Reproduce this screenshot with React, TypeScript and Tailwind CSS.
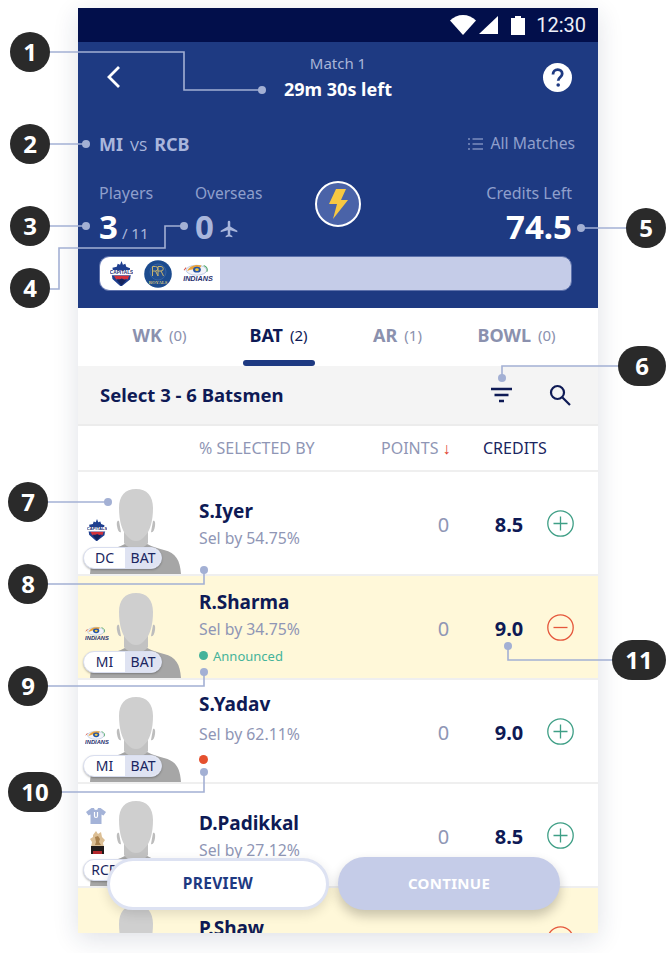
import React from "react";

const DC = ({ s = 24 }: { s?: number }) => (
  <svg width={s} height={s * 1.12} viewBox="0 0 24 27">
    <path d="M12 0l1.500 4 2.500-1 1 3 4 1.500-.5 3 2.500 1.500-1.500 4-.5 3.500-9.500 7.500L2.500 19l-.5-3.500L.5 11.500 3 10l-.5-3L7 6l1-3 2.500 1z" fill="#1f3f8f" />
    <path d="M4 15.500h16l-1.500 4-2-1-1.500 2-2.500-2.500-2.500 2.500-1.500-2-2 1z" fill="#d4323a" />
    <path d="M7 20l5-1.500 5 1.500-5 6z" fill="#14245e" />
    <rect x="0.500" y="9.500" width="23" height="5.500" rx="0.800" fill="#fff" />
    <text x="12" y="13.800" textAnchor="middle" fontSize="5" fontWeight="800" fill="#1b2f73" fontFamily="Liberation Sans, sans-serif">CAPITALS</text>
  </svg>
);
const RR = ({ s = 28 }: { s?: number }) => (
  <svg width={s} height={s} viewBox="0 0 28 28">
    <circle cx="14" cy="14" r="13.800" fill="#1c4b8e" />
    <circle cx="14" cy="12" r="8" fill="#234f90" stroke="#3f6ca8" strokeWidth="0.700" />
    <path d="M8.500 16V6.500h3a2.200 2.200 0 010 4.500h-3M11.500 11l2.500 5M14 16V6.500h3a2.200 2.200 0 010 4.500h-3M17 11l2.500 5" fill="none" stroke="#c9b56e" strokeWidth="1" />
    <text x="14" y="24" textAnchor="middle" fontSize="4.600" fontWeight="700" fill="#d3c27e" fontFamily="Liberation Serif, serif">ROYALS</text>
  </svg>
);
const MI = ({ w = 28 }: { w?: number }) => (
  <svg width={w} height={w * 0.62} viewBox="0 0 29 18">
    <ellipse cx="13" cy="6" rx="10" ry="4.800" fill="#f3f4f8" stroke="#9cb0d6" strokeWidth="0.600" />
    <path d="M4 7c2-5 8-7 14-5.500L15 6C11 4.500 8 5 4 7z" fill="#e9a23b" />
    <ellipse cx="13.500" cy="5.500" rx="3.800" ry="2.800" fill="#2555a6" />
    <ellipse cx="13.500" cy="5.500" rx="1.800" ry="1.300" fill="#f5c83c" />
    <path d="M20 1.500a8 5 0 013 6" stroke="#4ea868" strokeWidth="1" fill="none" />
    <path d="M3 3.500L1 6" stroke="#d9574a" strokeWidth="1" fill="none" />
    <text x="14.500" y="16.500" textAnchor="middle" fontSize="7" fontWeight="800" fontStyle="italic" fill="#27306e" fontFamily="Liberation Sans, sans-serif">INDIANS</text>
  </svg>
);
const RCB = () => (
  <svg width="15" height="23" viewBox="0 0 15 23">
    <path d="M3 4l3-4 2 3 3-2 1 5 3 3-2 3 1 4H1l1-5-2-3 3-2z" fill="#dcbf95" />
    <path d="M5 6l3-1 2 3-1 3 2 3H5l1-3z" fill="#a9824f" />
    <rect x="1" y="15" width="13" height="8" fill="#1f1a1a" />
    <rect x="3" y="20" width="9" height="3" fill="#b3282d" />
  </svg>
);
const Shirt = () => (
  <svg width="20" height="16" viewBox="0 0 20 16">
    <path d="M5.500 0h2.500a2 2 0 004 0h2.500L20 4l-2.500 3.500-2-1V16h-11V6.500l-2 1L0 4z" fill="#a4b3d8" />
    <path d="M8.500 4v4a1.500 1.500 0 003 0V4" stroke="#fff" strokeWidth="1.200" fill="none" />
  </svg>
);

const Avatar = () => (
  <svg className="absolute left-[12px] bottom-0" width="91" height="85" viewBox="0 0 91 85">
    <path d="M0 85c1-14 6-21 18-24 10-3 17-5 21-9h14c4 4 11 6 21 9 12 3 16 10 17 24z" fill="#a6a6a6" />
    <path d="M34 30h24v24c-3 4-8 6-12 6s-9-2-12-6z" fill="#c2c2c2" />
    <path d="M29 32c-2-1-2.500 2-2 5 .6 4 2 7 4 6zM63 32c2-1 2.500 2 2 5-.6 4-2 7-4 6z" fill="#bdbdbd" />
    <path d="M46 0c-11 0-17 7-17 19 0 13 3 24 9 29 3 3 5 4 8 4s5-1 8-4c6-5 9-16 9-29C63 7 57 0 46 0z" fill="#cfcfcf" />
  </svg>
);

type P = {
  name: string; sel?: string; credits?: string; team?: string; logo?: React.ReactNode;
  picked?: boolean; status?: "ann" | "un"; shirt?: boolean;
};

const Row = ({ name, sel, credits, team, logo, picked, status, shirt }: P) => (
  <div className={`flex h-[104px] shrink-0 border-b-2 border-[#efefef] ${picked ? "bg-[#fff8d9]" : "bg-white"}`}>
    <div className="relative h-full w-[121px] shrink-0">
      <Avatar />
      {shirt && <div className="absolute left-[8px] top-[24px]"><Shirt /></div>}
      {logo && <div className="absolute left-[7px] top-[47px] flex h-[22px] w-[24px] items-center justify-center">{logo}</div>}
      {team && (
        <div className="absolute left-[5px] bottom-[5px] flex h-[22px] w-[79px] overflow-hidden rounded-full border border-[#d9deef] bg-white text-[14px] leading-[20px] text-[#1a2560] shadow-[0_1px_2px_rgba(0,0,0,0.25)]">
          <span className="w-[41px] text-center">{team}</span>
          <span className="flex-1 bg-[#dfe3f2] text-center">BAT</span>
        </div>
      )}
    </div>
    <div className={`flex min-w-0 flex-1 flex-col ${sel ? "justify-center" : "pt-[28px]"} ${status ? "" : "pt-[2px]"}`}>
      <div className="whitespace-nowrap text-[19px] font-bold leading-[24px] text-[#0e1a55]">{name}</div>
      {sel && <div className={`text-[15.8px] leading-[22px] text-[#8f96b5] ${status === "un" ? "mt-[7px]" : "mt-[4px]"}`}>{sel}</div>}
      {status === "ann" && (
        <div className="mt-[7px] flex items-center gap-[5px] text-[13px] leading-[18px] text-[#45b39a]">
          <span className="h-[9px] w-[9px] rounded-full bg-[#45b39a]" />Announced
        </div>
      )}
      {status === "un" && (
        <div className="mb-[2px] mt-[5px] flex h-[18px] items-center"><span className="h-[9px] w-[9px] rounded-full bg-[#e5502e]" /></div>
      )}
    </div>
    <div className="flex w-[87px] items-center justify-center pt-[3px] text-[20px] text-[#8f96b5]">{sel ? "0" : ""}</div>
    <div className="flex w-[44px] items-center justify-center pt-[3px] text-[20px] font-bold text-[#0e1a55]">{credits}</div>
    <div className="flex w-[67px] items-center pl-[16px] pt-[1px]">
      <svg width="27" height="27" viewBox="0 0 27 27" className="shrink-0" fill="none" stroke={picked ? "#e5573c" : "#3f9f86"} strokeWidth="1.300">
        <circle cx="13.500" cy="13.500" r="12.700" />
        <path d={picked ? "M6.500 13.500h14" : "M6.500 13.500h14M13.500 6.500v14"} />
      </svg>
    </div>
  </div>
);

const Badge = ({ n, cls }: { n: string; cls: string }) => (
  <div className={`absolute flex h-[40px] items-center justify-center rounded-full bg-[#2a2a2a] text-[24px] font-bold text-white ${cls}`}>{n}</div>
);

const Dot = ({ x, y }: { x: number; y: number }) => <circle cx={x} cy={y} r="4" fill="#a3b0d4" />;

const Tab = ({ t, n, active }: { t: string; n: string; active?: boolean }) => (
  <div className="relative flex flex-1 items-center justify-center gap-[7px] pb-[4px]">
    <span className={`text-[18px] font-bold ${active ? "text-[#0e1a55]" : "text-[#8b91ae]"}`}>{t}</span>
    <span className={`text-[15px] ${active ? "text-[#0e1a55]" : "text-[#8b91ae]"}`}>{n}</span>
    {active && <span className="absolute bottom-0 left-[24px] h-[6px] w-[72px] rounded-full bg-[#1e3a82]" />}
  </div>
);

export default function App() {
  return (
    <div className="relative h-[953px] w-[666px] overflow-hidden bg-white pt-[8px] font-['Noto_Sans',sans-serif]">
      <div className="relative ml-[78px] flex h-[925px] w-[520px] flex-col overflow-hidden bg-white shadow-[0_6px_24px_rgba(30,40,80,0.14)]">
        {/* status bar */}
        <div className="flex h-[34px] shrink-0 items-center justify-end bg-[#020f4b] pr-[12px]">
          <svg width="26" height="20" viewBox="0 0 26 20" fill="#fff"><path d="M0 5.500C3.500 2 8 0 13 0s9.500 2 13 5.500L13 20z" /></svg>
          <svg width="19" height="18" viewBox="0 0 19 18" fill="#fff" className="ml-[3px]"><path d="M19 0v18H0z" /></svg>
          <svg width="14" height="19" viewBox="0 0 14 19" fill="#fff" className="ml-[13px]"><path d="M4 0h6v2h4v17H0V2h4z" /></svg>
          <span className="ml-[11px] font-['Roboto',sans-serif] text-[20px] leading-none text-[#eef0f8]">12:30</span>
        </div>
        {/* header */}
        <div className="flex h-[266px] shrink-0 flex-col bg-[#1e3a82] pl-[21px] pr-[26px]">
          <div className="relative flex h-[70px] flex-col items-center pl-[5px] pt-[10px]">
            <span className="text-[15px] leading-[22px] text-[#a9b5d8]">Match 1</span>
            <span className="mt-[3px] text-[18px] font-bold leading-[24px] text-white">29m 30s left</span>
            <svg className="absolute left-[6px] top-[22px]" width="16" height="26" viewBox="0 0 16 26" fill="none" stroke="#fff" strokeWidth="2.800"><path d="M14 3L4 13l10 10" /></svg>
            <svg className="absolute right-0 top-[21px]" width="29" height="29" viewBox="0 0 29 29">
              <circle cx="14.500" cy="14.500" r="14.500" fill="#fff" />
              <path d="M10 11.500c0-3 2-4.800 4.700-4.800s4.500 1.700 4.500 4c0 3.500-4 3.500-4 7" fill="none" stroke="#1e3a82" strokeWidth="2.800" />
              <circle cx="15.200" cy="22" r="1.800" fill="#1e3a82" />
            </svg>
          </div>
          <div className="-mr-[3px] mt-[20px] flex h-[24px] items-center justify-between text-[#a9b6dc]">
            <div className="flex items-baseline">
              <span className="text-[18px] font-bold">MI</span>
              <span className="ml-[7px] text-[15px]">VS</span>
              <span className="ml-[7px] text-[18px] font-bold">RCB</span>
            </div>
            <div className="flex items-center text-[15.700px] text-[#8f9fcc]">
              <svg width="15" height="12" viewBox="0 0 15 12" stroke="#a9b6dc" strokeWidth="1.200" fill="none" className="mr-[8px]">
                <path d="M0 1h2M4.500 1H15M0 6h2M4.500 6H15M0 11h2M4.500 11H15" />
              </svg>
              All Matches
            </div>
          </div>
          <div className="mt-[26px] flex h-[74px] items-start">
            <div className="flex w-[216px] shrink-0">
              <div className="w-[96px]">
                <div className="text-[16px] leading-[22px] text-[#8f9fcc]">Players</div>
                <div className="mt-[3px] flex items-baseline leading-[40px]">
                  <span className="text-[33px] font-bold text-white">3</span>
                  <span className="ml-[4px] text-[15px] text-[#a9b6dc]">/ 11</span>
                </div>
              </div>
              <div>
                <div className="text-[15.500px] leading-[22px] text-[#8f9fcc]">Overseas</div>
                <div className="mt-[3px] flex items-center leading-[40px]">
                  <span className="text-[33px] font-bold text-[#a9b6dc]">0</span>
                  <svg className="ml-[5px] mt-[3px]" width="20" height="20" viewBox="0 0 24 24" fill="#a9b6dc">
                    <path d="M22 16v-2l-8.500-5V3.500a1.500 1.500 0 00-3 0V9L2 14v2l8.500-2.500V19L8 20.500V22l4-1 4 1v-1.500L13.500 19v-5.500z" />
                  </svg>
                </div>
              </div>
            </div>
            <div className="-mt-[1px] flex h-[46px] w-[46px] shrink-0 items-center justify-center rounded-full border-[2.500px] border-white bg-[#4a63a8]">
              <svg width="20" height="30" viewBox="0 0 20 30" fill="#f7c842"><path d="M8 0h10l-5 11h7L5 30l4-15H1z" /></svg>
            </div>
            <div className="flex flex-1 flex-col items-end">
              <div className="text-[16px] leading-[22px] text-[#8f9fcc]">Credits Left</div>
              <div className="mt-[3px] text-[33px] font-bold leading-[40px] text-white">74.5</div>
            </div>
          </div>
          <div className="flex h-[35px] overflow-hidden rounded-[10px] border border-[#5d71ab] bg-[#c5cce8]">
            <div className="flex w-[120px] items-center gap-[11px] rounded-l-[10px] bg-white pl-[10px]">
              <DC s={23} />
              <RR s={28} />
              <MI w={30} />
            </div>
          </div>
        </div>
        {/* tabs */}
        <div className="flex h-[58px] shrink-0 bg-white px-[22px]">
          <Tab t="WK" n="(0)" />
          <Tab t="BAT" n="(2)" active />
          <Tab t="AR" n="(1)" />
          <Tab t="BOWL" n="(0)" />
        </div>
        {/* select bar */}
        <div className="flex h-[60px] shrink-0 items-center border-b-2 border-[#ececec] bg-[#f4f4f4] pl-[22px] pr-[27px]">
          <span className="flex-1 text-[18.500px] font-bold text-[#0e1a55]">Select 3 - 6 Batsmen</span>
          <svg width="21" height="16" viewBox="0 0 21 16" stroke="#0e1a55" strokeWidth="2.300" fill="none"><path d="M0 2h21M3.500 8h14M8 14h5" /></svg>
          <svg className="ml-[37px]" width="22" height="22" viewBox="0 0 22 22" stroke="#0e1a55" strokeWidth="2.200" fill="none"><circle cx="8.500" cy="8.500" r="6.500" /><path d="M13.500 13.500L21 21" /></svg>
        </div>
        {/* column headers */}
        <div className="flex h-[46px] shrink-0 items-center border-b-2 border-[#efefef] bg-white pb-[1px] pl-[121px] text-[16px]">
          <span className="w-[182px] text-[#8f96b5]">% SELECTED BY</span>
          <span className="w-[102px] text-[#8f96b5]">POINTS <span className="text-[#e0412e]">↓</span></span>
          <span className="text-[#1a2560]">CREDITS</span>
        </div>
        <Row name="S.Iyer" sel="Sel by 54.75%" credits="8.5" team="DC" logo={<DC s={20} />} />
        <Row name="R.Sharma" sel="Sel by 34.75%" credits="9.0" team="MI" logo={<MI w={25} />} picked status="ann" />
        <Row name="S.Yadav" sel="Sel by 62.11%" credits="9.0" team="MI" logo={<MI w={25} />} status="un" />
        <Row name="D.Padikkal" sel="Sel by 27.12%" credits="8.5" team="RCB" logo={<RCB />} shirt />
        <Row name="P.Shaw" picked />
        {/* floating buttons */}
        <div className="absolute bottom-[23px] left-[29px] flex h-[52px] w-[222px] items-center justify-center rounded-full border-[3px] border-[#dde2f2] bg-white text-[15.500px] font-bold tracking-[0.3px] text-[#1e3a82] shadow-[0_4px_12px_rgba(0,0,0,0.12)]">PREVIEW</div>
        <div className="absolute bottom-[23px] left-[260px] flex h-[53px] w-[222px] items-center justify-center rounded-full bg-[#c5cce8] text-[15px] font-bold tracking-[0.3px] text-white shadow-[0_6px_12px_rgba(0,0,0,0.22)]">CONTINUE</div>
      </div>

      {/* annotation leaders */}
      <svg className="absolute left-0 top-0" width="666" height="953" fill="none" stroke="#a3b0d4" strokeWidth="1.600">
        <path d="M48 52H184V90H262" />
        <path d="M48 144H86" />
        <path d="M48 226H86" />
        <path d="M48 289H59V248H165V226H184" />
        <path d="M581 228H628" />
        <path d="M502 378V366H624" />
        <path d="M46 502H108" />
        <path d="M46 584H204V570" />
        <path d="M46 686H204V672" />
        <path d="M60 792H204V772" />
        <path d="M508 646V660H613" />
        <g stroke="none">
          <Dot x={262} y={90} /><Dot x={86} y={144} /><Dot x={86} y={226} /><Dot x={184} y={226} />
          <Dot x={581} y={228} /><Dot x={502} y={378} /><Dot x={108} y={502} /><Dot x={204} y={570} />
          <Dot x={204} y={672} /><Dot x={204} y={772} /><Dot x={508} y={646} />
        </g>
      </svg>
      <Badge n="1" cls="left-[10px] top-[32px] w-[40px]" />
      <Badge n="2" cls="left-[10px] top-[124px] w-[40px]" />
      <Badge n="3" cls="left-[10px] top-[206px] w-[40px]" />
      <Badge n="4" cls="left-[10px] top-[268px] w-[40px]" />
      <Badge n="5" cls="left-[626px] top-[208px] w-[40px]" />
      <Badge n="6" cls="left-[618px] top-[346px] w-[48px]" />
      <Badge n="7" cls="left-[8px] top-[482px] w-[40px]" />
      <Badge n="8" cls="left-[8px] top-[564px] w-[40px]" />
      <Badge n="9" cls="left-[8px] top-[666px] w-[40px]" />
      <Badge n="10" cls="left-[8px] top-[772px] w-[54px]" />
      <Badge n="11" cls="left-[612px] top-[640px] w-[54px]" />
    </div>
  );
}
